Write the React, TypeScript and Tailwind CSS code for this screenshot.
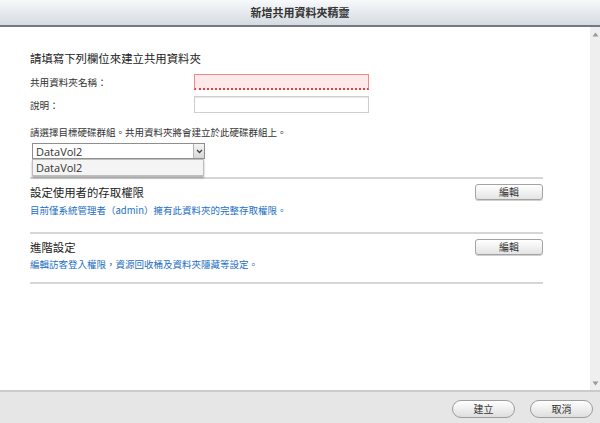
import React from 'react';

const cjk = '"Noto Sans CJK TC", "Noto Sans CJK SC", sans-serif';

function EditButton() {
  return (
    <button className="h-[16px] w-[68px] rounded-[3px] border border-[#a3a3a3] bg-gradient-to-b from-white to-[#e4e4e4] text-[10px] leading-none text-[#333] shadow-[0_1px_0_#d0d0d0]">
      編輯
    </button>
  );
}

function PillButton({ label }: { label: string }) {
  return (
    <button className="h-[18px] w-[63px] rounded-full border border-[#9c9c9c] bg-gradient-to-b from-white to-[#dedede] text-[10px] leading-none text-[#333]">
      {label}
    </button>
  );
}

export default function App() {
  return (
    <div
      className="flex h-[423px] w-[600px] flex-col overflow-hidden bg-white text-[#333]"
      style={{ fontFamily: cjk }}
    >
      {/* Header */}
      <div className="flex h-[27px] shrink-0 items-center justify-center border-b-2 border-[#737a82] bg-gradient-to-b from-[#f7f9fb] to-[#d5dbe1]">
        <span className="text-[11px] font-bold text-[#333]">新增共用資料夾精靈</span>
      </div>

      {/* Body */}
      <div className="flex min-h-0 flex-1">
        <div className="flex-1 pl-[30px] pr-[47px] pt-[23px]">
          <div className="text-[11.4px] leading-[16px] text-[#222]">請填寫下列欄位來建立共用資料夾</div>

          <div className="mt-[8px] flex items-center">
            <span className="w-[164px] text-[9.6px] leading-[16px]">共用資料夾名稱：</span>
            <div className="h-[16px] w-[175px] border border-[#f08a8a] border-b-2 border-b-[#e04040] bg-[#fde9e9]" style={{ borderBottomStyle: 'dotted' }} />
          </div>

          <div className="mt-[6px] flex items-center">
            <span className="w-[164px] text-[9.6px] leading-[16px]">說明：</span>
            <div className="h-[17px] w-[175px] border border-[#cfcfcf] bg-white shadow-[inset_0_1px_1px_#e6e6e6]" />
          </div>

          <div className="mt-[11px] text-[9.5px] leading-[16px]">請選擇目標硬碟群組。共用資料夾將會建立於此硬碟群組上。</div>

          <div className="relative ml-[2px] mt-[3px] w-[173px]">
            <div className="flex h-[16px] items-stretch border border-[#8f8f8f] bg-white">
              <div
                className="flex flex-1 items-center pl-[3px] text-[11px] leading-none text-[#333]"
                style={{ fontFamily: '"Open Sans", sans-serif' }}
              >
                DataVol2
              </div>
              <span className="flex w-[11px] items-center justify-center border-l border-[#b5b5b5] bg-gradient-to-b from-[#f4f4f4] to-[#d8d8d8]">
                <svg width="7" height="5" viewBox="0 0 7 5">
                  <path d="M1 1 L3.5 3.5 L6 1" fill="none" stroke="#444" strokeWidth="1.3" />
                </svg>
              </span>
            </div>
            <div
              className="absolute left-0 top-full z-10 flex h-[17px] w-[172px] items-center border border-[#bdbdbd] bg-[#f4f4f4] pl-[3px] text-[11px] leading-none text-[#333] shadow-[0_2px_2px_rgba(0,0,0,0.3)]"
              style={{ fontFamily: '"Open Sans", sans-serif' }}
            >
              DataVol2
            </div>
          </div>

          <div className="mt-[18px] h-[2px] bg-[#d6d6d6]" />

          <div className="mt-[5px] flex items-center justify-between">
            <span className="text-[11.4px] leading-[16px] text-[#222]">設定使用者的存取權限</span>
            <EditButton />
          </div>
          <div className="mt-[2px] text-[9.5px] leading-[16px] text-[#1d6fc4]">
            目前僅系統管理者（admin）擁有此資料夾的完整存取權限。
          </div>

          <div className="mt-[14px] h-[2px] bg-[#d6d6d6]" />

          <div className="mt-[5px] flex items-center justify-between">
            <span className="text-[11.4px] leading-[16px] text-[#222]">進階設定</span>
            <EditButton />
          </div>
          <div className="mt-[1px] text-[9.5px] leading-[16px] text-[#1d6fc4]">
            編輯訪客登入權限，資源回收桶及資料夾隱藏等設定。
          </div>

          <div className="mt-[10px] h-[2px] bg-[#d6d6d6]" />
        </div>

        {/* Scrollbar */}
        <div className="flex w-[10px] shrink-0 flex-col items-center justify-between bg-[#efefef] pb-[4px] pt-[5px]">
          <svg width="7" height="5" viewBox="0 0 7 5">
            <path d="M3.5 0.5 L6.5 4.5 L0.5 4.5 Z" fill="#9a9a9a" />
          </svg>
          <svg width="7" height="5" viewBox="0 0 7 5">
            <path d="M0.5 0.5 L6.5 0.5 L3.5 4.5 Z" fill="#9a9a9a" />
          </svg>
        </div>
      </div>

      {/* Footer */}
      <div className="flex h-[33px] shrink-0 items-center justify-end gap-[15px] border-t-2 border-[#cbcbcb] bg-[#e6e6e6] pr-[7px] pt-[2px]">
        <PillButton label="建立" />
        <PillButton label="取消" />
      </div>
    </div>
  );
}
